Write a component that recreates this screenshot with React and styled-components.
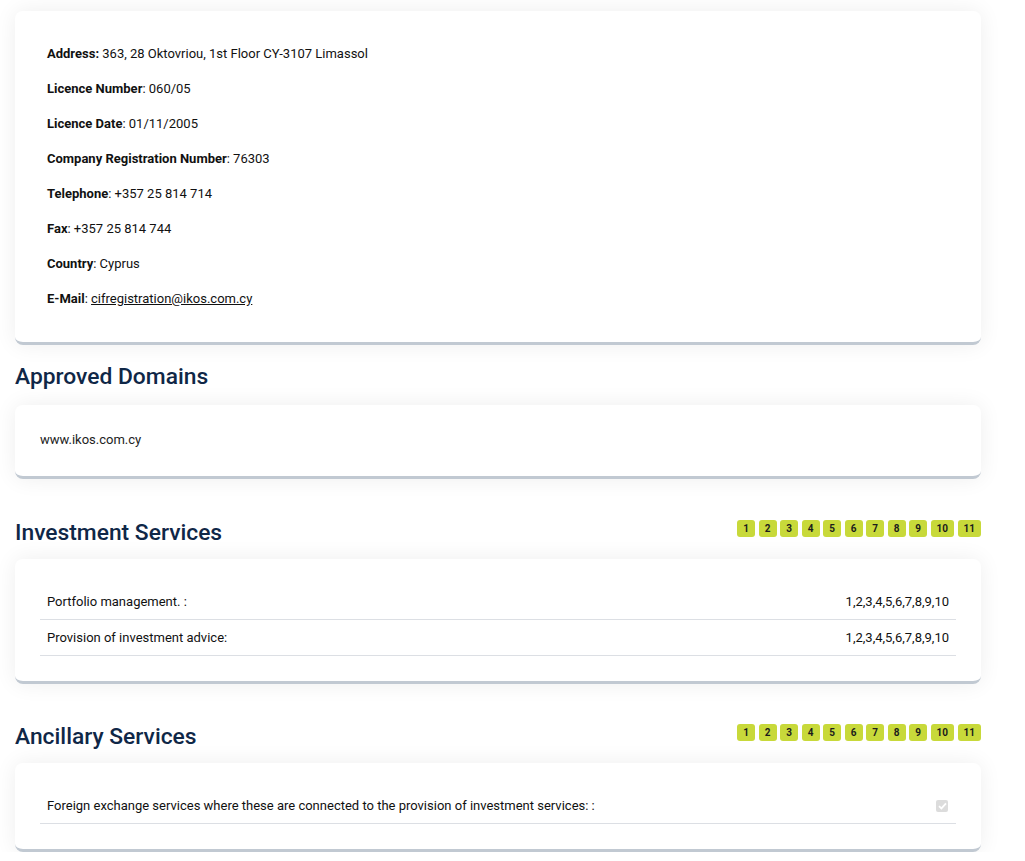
import React from 'react';
import styled, { createGlobalStyle } from 'styled-components';

const Global = createGlobalStyle`
  body {
    margin: 0;
    background: #ffffff;
    font-family: Roboto, "Liberation Sans", sans-serif;
    color: #111;
  }
`

const Page = styled.div`
  width: 966px;
  padding: 11px 0 0 15px;
`

const Card = styled.div`
  background: #fff;
  border-radius: 8px;
  border-bottom: 3px solid #c1c9d2;
  box-shadow: 0 0 22px rgba(0, 0, 0, 0.07);
  padding: ${props => props.pad || '0'};
  margin-bottom: ${props => props.mb || '0'};
`

const Info = styled.p`
  margin: 0 0 21px;
  font-size: 13px;
  line-height: 14px;
  color: #111;
  &:last-child { margin-bottom: 0; }
  b { font-weight: 700; }
  a { color: #111; text-decoration: underline; }
`

const Header = styled.div`
  display: flex;
  align-items: flex-end;
  justify-content: space-between;
  margin-bottom: ${props => props.mb || '14px'};
`

const H = styled.h2`
  margin: 0;
  font-size: 22.8px;
  font-weight: 500;
  color: #0f2747;
  line-height: 28px;
`

const Badges = styled.div`
  display: flex;
  gap: 3.5px;
  align-self: flex-start;
  margin-top: 1px;
`

const Badge = styled.span`
  display: inline-flex;
  align-items: center;
  justify-content: center;
  width: ${props => (props.wide ? '23.5px' : '18px')};
  height: 17px;
  border-radius: 3px;
  background: #c8d93a;
  color: #1c1c1c;
  font-size: 10px;
  font-weight: 700;
`

const Domain = styled.div`
  font-size: 13px;
  color: #222;
`

const List = styled.div`
  padding: 25px 25px 25px;
`

const Row = styled.div`
  display: flex;
  justify-content: space-between;
  align-items: center;
  height: 35px;
  padding: 0 7px;
  border-bottom: 1px solid #dcdfe4;
  font-size: 13px;
  color: #111;
`

const Check = styled.span`
  width: 12px;
  height: 12px;
  border-radius: 2px;
  background: #dcdcdc;
  display: inline-flex;
  align-items: center;
  justify-content: center;
  margin-right: 1px;
`

const badges = ['1', '2', '3', '4', '5', '6', '7', '8', '9', '10', '11'];

const BadgeRow = () => (
  <Badges>
    {badges.map(b => <Badge key={b} wide={b.length > 1}>{b}</Badge>)}
  </Badges>
);

const App = () => (
  <Page>
    <Global />
    <Card pad="36px 32px 36px" mb="18px">
      <Info><b>Address:</b> 363, 28 Oktovriou, 1st Floor CY-3107 Limassol</Info>
      <Info><b>Licence Number</b>: 060/05</Info>
      <Info><b>Licence Date</b>: 01/11/2005</Info>
      <Info><b>Company Registration Number</b>: 76303</Info>
      <Info><b>Telephone</b>: +357 25 814 714</Info>
      <Info><b>Fax</b>: +357 25 814 744</Info>
      <Info><b>Country</b>: Cyprus</Info>
      <Info><b>E-Mail</b>: <a href="#">cifregistration@ikos.com.cy</a></Info>
    </Card>

    <Header mb="14px"><H>Approved Domains</H></Header>
    <Card pad="27px 25px 29px" mb="40px">
      <Domain>www.ikos.com.cy</Domain>
    </Card>

    <Header mb="12px">
      <H>Investment Services</H>
      <BadgeRow />
    </Header>
    <Card mb="39px">
      <List>
        <Row><span>Portfolio management. :</span><span>1,2,3,4,5,6,7,8,9,10</span></Row>
        <Row><span>Provision of investment advice:</span><span>1,2,3,4,5,6,7,8,9,10</span></Row>
      </List>
    </Card>

    <Header mb="12px">
      <H>Ancillary Services</H>
      <BadgeRow />
    </Header>
    <Card>
      <List>
        <Row>
          <span>Foreign exchange services where these are connected to the provision of investment services: :</span>
          <Check>
            <svg width="9" height="8" viewBox="0 0 9 8">
              <path d="M1 4.2 L3.4 6.4 L8 1.4" fill="none" stroke="#fff" strokeWidth="1.8" />
            </svg>
          </Check>
        </Row>
      </List>
    </Card>
  </Page>
);

export default App;
